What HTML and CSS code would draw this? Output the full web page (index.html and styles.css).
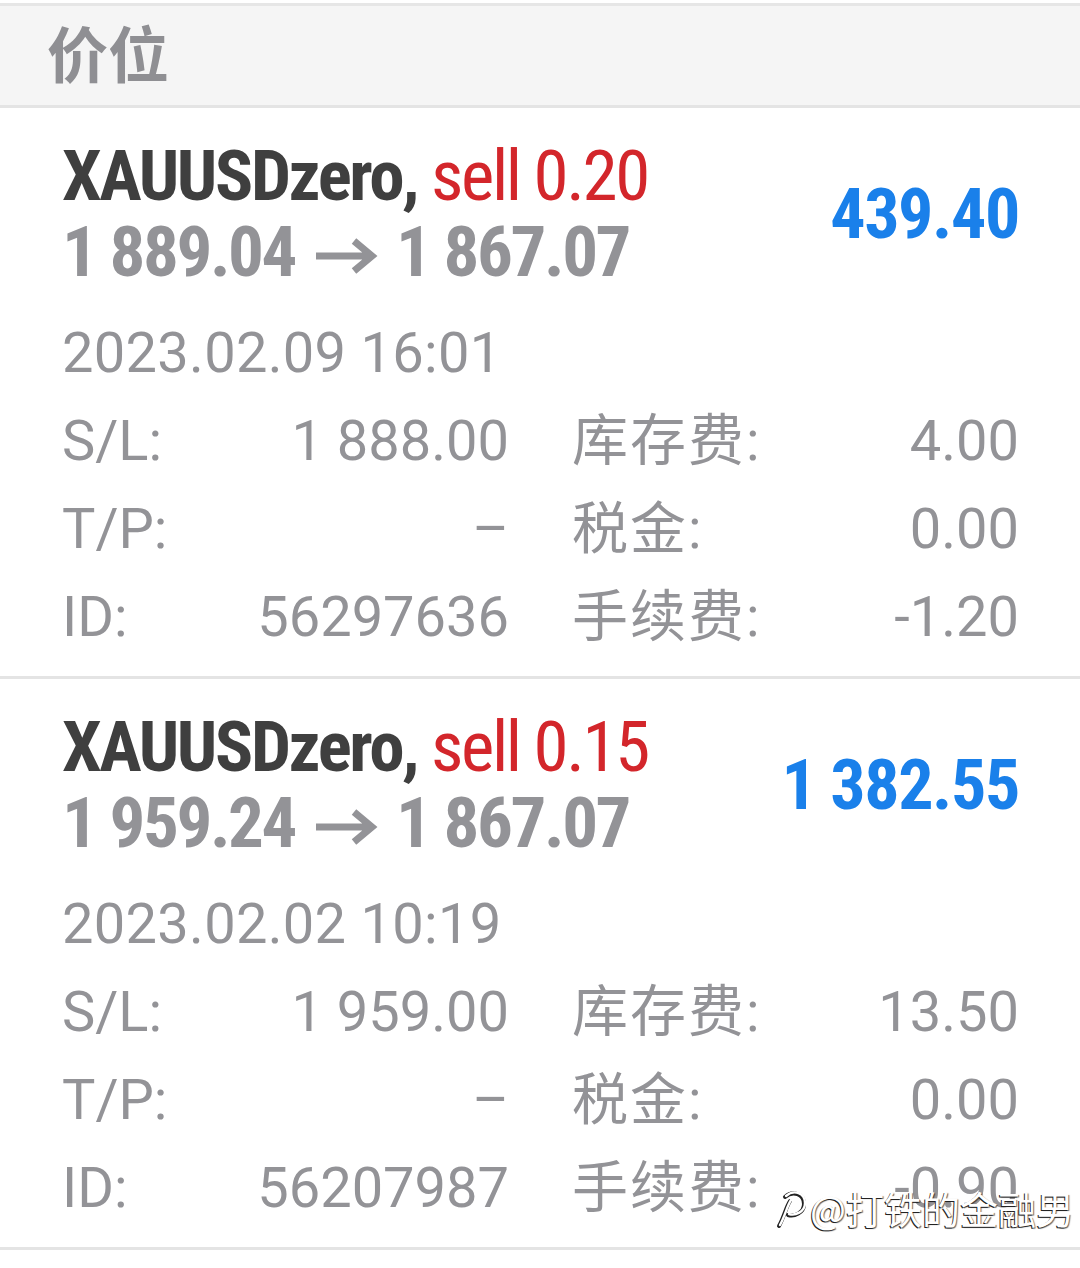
FILE: index.html
```html
<!DOCTYPE html>
<html lang="zh-CN">
  <head>
    <meta charset="UTF-8" />
    <meta name="viewport" content="width=device-width, initial-scale=1.0" />
    <title>价位</title>
    <link rel="stylesheet" href="styles.css">
  </head>
  <body>
    <div class="section-header">价位</div>

    <div class="deal">
      <div class="deal-head">
        <div class="deal-title">
          <div class="deal-line"><span class="symbol">XAUUSDzero,</span> <span class="side">sell 0.20</span></div>
          <div class="deal-line price">1 889.04 <svg class="arrow" width="62" height="36" viewBox="0 0 62 36"><path d="M0 18 H54 M38 3 L56 18 L38 33" fill="none" stroke="#939397" stroke-width="7" /></svg> 1 867.07</div>
        </div>
        <div class="profit">439.40</div>
      </div>
      <div class="deal-time">2023.02.09 16:01</div>
      <div class="deal-grid">
        <div class="field"><span>S/L:</span><span>1 888.00</span></div>
        <div class="field"><span class="cn">库存费:</span><span>4.00</span></div>
        <div class="field"><span>T/P:</span><span>&ndash;</span></div>
        <div class="field"><span class="cn">税金:</span><span>0.00</span></div>
        <div class="field"><span>ID:</span><span>56297636</span></div>
        <div class="field"><span class="cn">手续费:</span><span>-1.20</span></div>
      </div>
    </div>

    <div class="deal">
      <div class="deal-head">
        <div class="deal-title">
          <div class="deal-line"><span class="symbol">XAUUSDzero,</span> <span class="side">sell 0.15</span></div>
          <div class="deal-line price">1 959.24 <svg class="arrow" width="62" height="36" viewBox="0 0 62 36"><path d="M0 18 H54 M38 3 L56 18 L38 33" fill="none" stroke="#939397" stroke-width="7" /></svg> 1 867.07</div>
        </div>
        <div class="profit">1 382.55</div>
      </div>
      <div class="deal-time">2023.02.02 10:19</div>
      <div class="deal-grid">
        <div class="field"><span>S/L:</span><span>1 959.00</span></div>
        <div class="field"><span class="cn">库存费:</span><span>13.50</span></div>
        <div class="field"><span>T/P:</span><span>&ndash;</span></div>
        <div class="field"><span class="cn">税金:</span><span>0.00</span></div>
        <div class="field"><span>ID:</span><span>56207987</span></div>
        <div class="field"><span class="cn">手续费:</span><span>-0.90</span></div>
      </div>
    </div>

    <div class="watermark">
      <svg class="wm-logo" width="34" height="42" viewBox="0 0 34 42">
        <path d="M12 9 C20 2 31 6 31 16 C31 25 21 29 15 27 M17 13 C13 19 11 29 6 38" fill="none" stroke="#222" stroke-width="4" stroke-linecap="round" transform="translate(-1 1)" />
        <path d="M12 9 C20 2 31 6 31 16 C31 25 21 29 15 27 M17 13 C13 19 11 29 6 38" fill="none" stroke="#fff" stroke-width="2.4" stroke-linecap="round" />
      </svg>
      <span>@打铁的金融男</span>
    </div>
  </body>
</html>
```

FILE: styles.css
```css
body {
  margin: 0;
  background-color: #fff;
  font-family: Roboto, "Noto Sans CJK SC", sans-serif;
  color: #939397;
  position: relative;
  min-height: 1268px;
}

.section-header {
  margin-top: 3px;
  border-top: 3px solid #e6e6e6;
  border-bottom: 3px solid #e4e4e4;
  background-color: #f5f5f5;
  height: 99px;
  padding-left: 47px;
  font-family: "Noto Sans CJK SC", sans-serif;
  font-size: 61px;
  font-weight: 700;
  line-height: 92px;
  color: #8f8f93;
}

.deal {
  padding: 30px 61px 15px 62px;
  border-bottom: 3px solid #e4e4e4;
}

.deal-head {
  display: flex;
  justify-content: space-between;
  align-items: center;
}

.deal-line {
  font-family: "Roboto Condensed", "Liberation Sans Narrow", Roboto, sans-serif;
  font-stretch: condensed;
  font-size: 71px;
  line-height: 76px;
  letter-spacing: -2.4px;
  white-space: nowrap;
}

.symbol {
  font-weight: 700;
  color: #3f3f3f;
}

.side {
  color: #d3262b;
}

.price {
  font-weight: 700;
  color: #939397;
}

.arrow {
  vertical-align: 2px;
  margin: 0 4px 0 7px;
}

.profit {
  font-family: "Roboto Condensed", "Liberation Sans Narrow", Roboto, sans-serif;
  font-stretch: condensed;
  font-size: 70px;
  font-weight: 700;
  letter-spacing: -1.4px;
  color: #1a80ea;
  white-space: nowrap;
}

.deal-time {
  margin-top: 19px;
  font-size: 56px;
  line-height: 88px;
  letter-spacing: 0.3px;
}

.deal-grid {
  display: grid;
  grid-template-columns: 447px 447px;
  column-gap: 63px;
}

.field {
  display: flex;
  justify-content: space-between;
  font-size: 56px;
  line-height: 88px;
  white-space: nowrap;
}

.cn {
  letter-spacing: 2px;
}

.watermark {
  position: absolute;
  left: 774px;
  top: 1180px;
  display: flex;
  align-items: center;
  gap: 2px;
  font-family: "Noto Sans CJK SC", sans-serif;
  font-size: 38px;
  color: #fff;
  text-shadow: -1px 1px 0 #222, 1px 1px 1px rgba(0, 0, 0, 0.6);
}
```
